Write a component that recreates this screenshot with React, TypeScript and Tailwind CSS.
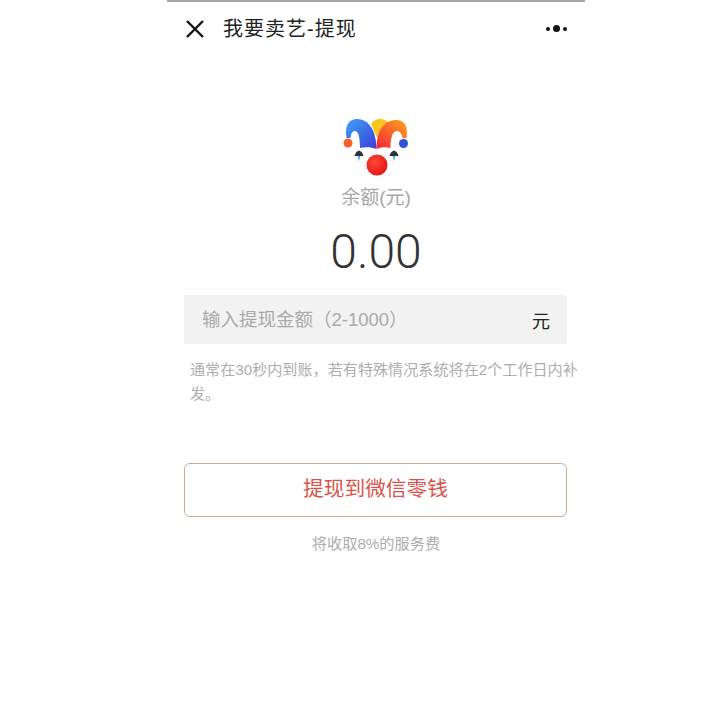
import React from "react";

const font = { fontFamily: '"Liberation Sans", "Noto Sans CJK SC", sans-serif' };

function Jester() {
  return (
    <svg width="66" height="62" viewBox="13 5 66 62" fill="none">
      <defs>
        <linearGradient id="blue" x1="0" y1="0" x2="1" y2="1">
          <stop offset="0" stopColor="#3fa2f7" />
          <stop offset="1" stopColor="#3a3ed6" />
        </linearGradient>
        <linearGradient id="orange" x1="0" y1="1" x2="1" y2="0">
          <stop offset="0" stopColor="#f3213c" />
          <stop offset="1" stopColor="#fda51c" />
        </linearGradient>
        <radialGradient id="nose" cx="0.4" cy="0.35" r="0.7">
          <stop offset="0" stopColor="#fb4a3c" />
          <stop offset="1" stopColor="#e5120f" />
        </radialGradient>
      </defs>
      <path d="M41 14 C45 8 54 7 59 13 L47 28 Z" fill="#f9c51c" />
      <path d="M16.500 28 C14.500 15 19 9 27 9 C39 9 46.500 21 46.500 39 C41 37 36 37 30 38 C30 30 29 21 25 21 C22 21 21 24 20.500 28 Z" fill="url(#blue)" />
      <path d="M76.500 28 C78.500 15 74 10 66 10 C54 10 46.500 21 46.500 39 C51 37 56 37 60.500 38 C60.500 30 62 21 67 21 C70 21 72 24 72.500 28 Z" fill="url(#orange)" />
      <circle cx="18" cy="33" r="4.500" fill="#f4622a" />
      <circle cx="73.500" cy="33.500" r="4.500" fill="#2f52d8" />
      <path d="M24.500 46 C25 43 27 41 29 40.500 C31 41 33 43 33.500 46 Z" fill="#333" />
      <path d="M27.500 46 L29 51 L30.500 46 Z" fill="#4ab0ee" />
      <path d="M59.500 46 C60 43 62 41 64 40.500 C66 41 68 43 68.500 46 Z" fill="#333" />
      <path d="M62.500 46 L64 51 L65.500 46 Z" fill="#4ab0ee" />
      <circle cx="47" cy="55" r="10.500" fill="url(#nose)" />
    </svg>
  );
}

export default function App() {
  return (
    <div className="w-[720px] h-[720px] bg-white" style={font}>
      <div className="ml-[167px] w-[418px] h-[720px] flex flex-col border-t-2 border-[#a8a8a8]">
        <div className="flex items-center h-[54px] pl-[18px] pr-[18px] pb-[1px]">
          <svg width="20" height="20" viewBox="0 0 20 20" fill="none" stroke="#111" strokeWidth="2.4">
            <path d="M2 2 L18 18 M18 2 L2 18" />
          </svg>
          <span className="ml-[18px] text-[20px] leading-[28px] text-[#222] tracking-[1px]">我要卖艺-提现</span>
          <div className="ml-auto flex items-center gap-[3px]">
            <span className="w-[4px] h-[4px] rounded-full bg-[#111]" />
            <span className="w-[7px] h-[7px] rounded-full bg-[#111]" />
            <span className="w-[4px] h-[4px] rounded-full bg-[#111]" />
          </div>
        </div>

        <div className="flex flex-col items-center mt-[59px]">
          <Jester />
          <div className="mt-[7px] text-[19px] leading-[28px] text-[#a6a6a6]">余额(元)</div>
          <div className="mt-[13px] text-[48px] leading-[54px] text-[#333] font-light" style={{ fontFamily: 'Roboto, "Liberation Sans", sans-serif' }}>0.00</div>
        </div>

        <div className="ml-[17px] mr-[18px] mt-[16px] h-[49px] rounded-[2px] bg-[#f2f2f2] flex items-center pl-[18px] pr-[17px]">
          <span className="text-[18.500px] text-[#a9a9a9] font-normal">输入提现金额（2-1000）</span>
          <span className="ml-auto mt-[6px] text-[18px] text-[#222]">元</span>
        </div>

        <p className="ml-[23px] mr-[6px] mt-[14px] text-[15.120px] leading-[24px] text-[#adadad]">
          通常在30秒内到账，若有特殊情况系统将在2个工作日内补发。
        </p>

        <button className="ml-[17px] mr-[18px] mt-[57px] h-[54px] pb-[3px] rounded-[6px] border border-[#cda98c] bg-white text-[20.700px] text-[#d9534a]">
          提现到微信零钱
        </button>

        <div className="mt-[17px] text-center text-[15.200px] leading-[20px] text-[#adadad]">将收取8%的服务费</div>
      </div>
    </div>
  );
}
